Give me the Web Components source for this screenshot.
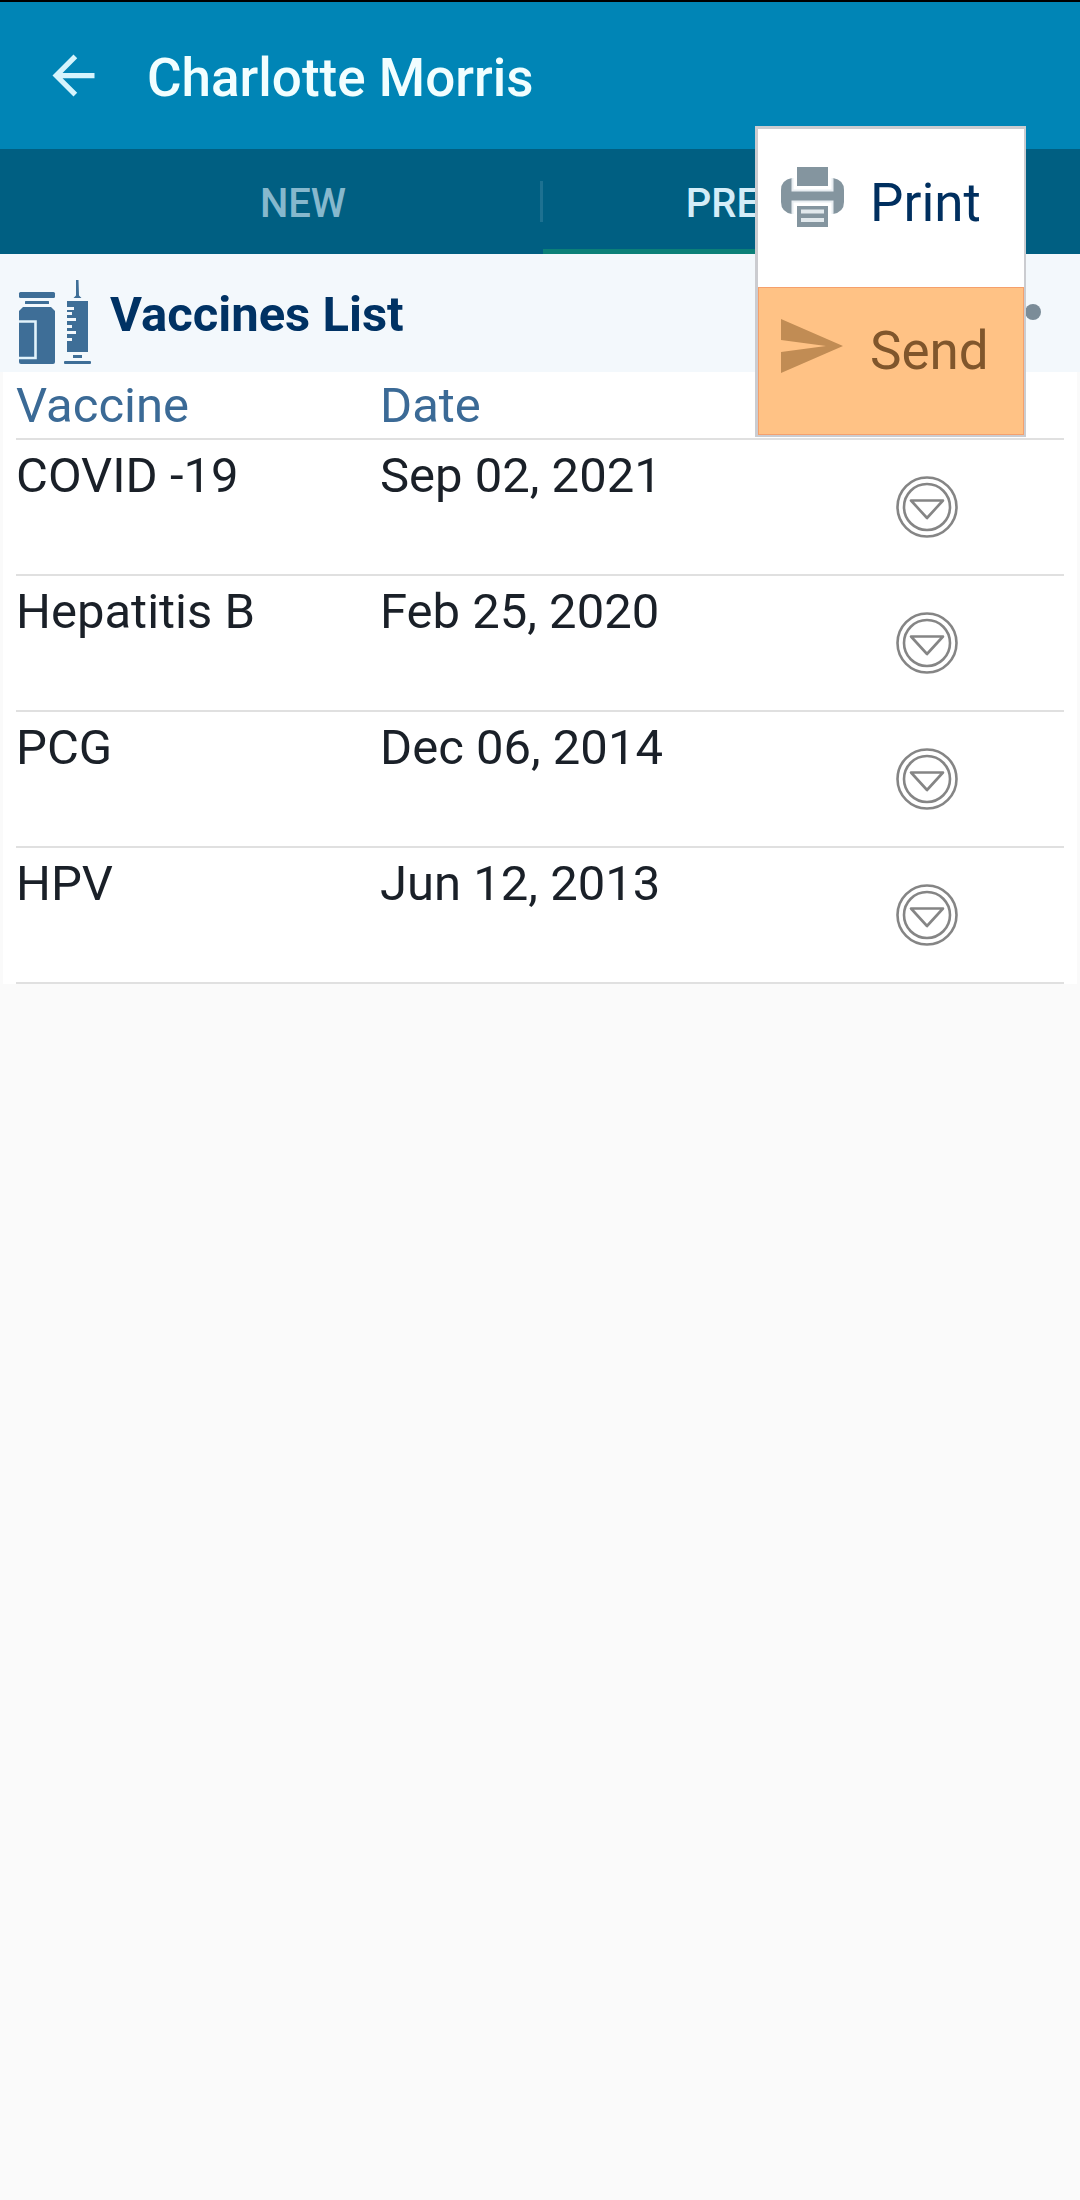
<!DOCTYPE html>
<html lang="en">
<head>
<meta charset="utf-8">
<meta name="viewport" content="width=device-width, initial-scale=1">
<title>Charlotte Morris</title>
<style>
  html, body { margin: 0; min-height: 100%; background: #fafafa; }
  body { font-family: Roboto, "Noto Sans", sans-serif; font-size: 49px; color: #1a2028; }
</style>
</head>
<body>
<patient-page></patient-page>
<script>
const base = `*{box-sizing:border-box}button{font:inherit;color:inherit;background:none;border:0;padding:0;margin:0;cursor:pointer}svg{display:block;flex:none}`;
function define(name, markup, render) {
  customElements.define(name, class extends HTMLElement {
    constructor() {
      super();
      this.attachShadow({ mode: "open" });
      const t = document.createElement("template");
      t.innerHTML = markup.replace("<style>", "<style>" + base);
      this.shadowRoot.append(t.content.cloneNode(true));
      if (render) render(this.shadowRoot);
    }
  });
}

define("app-header", `
<style>
  :host{display:flex;align-items:center;gap:42px;padding:0 42px;height:149px;border-top:2px solid #000;background:#0085b6;color:#f1feff}
  h1{margin:0;padding-top:4px;font-size:53px;line-height:64px;font-weight:500}
</style>
<button type="button" aria-label="Back"><svg width="63" height="63" viewBox="0 0 24 24" fill="#d5f4fd"><path d="M20 11H7.83l5.59-5.59L12 4l-8 8 8 8 1.41-1.41L7.83 13H20v-2z"/></svg></button>
<h1><slot></slot></h1>`);

define("tab-bar", `
<style>
  :host{display:flex;padding-left:66px;height:105px;background:#005f82}
</style>
<slot></slot>`);

define("tab-item", `
<style>
  :host{display:flex;align-items:center;width:474px;border-bottom:5px solid transparent;color:#86b8cd;font-size:40px;font-weight:500}
  :host([selected]){border-color:#0b8078;color:#d4edf8}
  button{width:100%;padding-top:10px;line-height:48px}
</style>
<button type="button"><slot></slot></button>`);

define("tab-divider", `
<style>
  :host{display:block;width:3px;height:41px;margin-top:32px;background:#1d7191}
</style>`);

define("section-header", `
<style>
  :host{display:flex;align-items:center;gap:19px;height:118px;padding:0 16px;background:#f3f8fc;color:#003264}
  .vial{align-self:flex-end;margin-bottom:8px}
  h2{flex:1;margin:0;padding-top:4px;font-size:49px;line-height:60px;font-weight:700}
</style>
<svg class="vial" width="75" height="84" viewBox="0 0 75 84" fill="#3e6e97">
  <rect x="3" y="12" width="36" height="6" rx="1.5"/>
  <rect x="9" y="21" width="24" height="3" rx=".5"/>
  <path d="M7 27h28l4 4v51q0 2-2 2H5q-2 0-2-2V31z"/>
  <path d="M3 41.500h16.500v36.500H3" fill="none" stroke="#e2f3fc" stroke-width="2.600"/>
  <path d="M60 0h2.500l.5 15.500 2.500 2.500h-8l2.500-2.500z"/>
  <path d="M51 21h21v51H51V61h5v-3h-5v-4h9v-3h-9v-3h5v-3h-5v-4h9v-3h-9v-3h5v-3h-5v-2h7v-3h-7z"/>
  <rect x="57" y="75" width="9" height="3"/>
  <rect x="48" y="81" width="27" height="3" rx="1"/>
</svg>
<h2><slot></slot></h2>
<button type="button" aria-label="More options"><svg width="77" height="63" viewBox="0 0 77 63" fill="#7b8c98"><circle cx="8" cy="30" r="8"/><circle cx="27" cy="30" r="8"/><circle cx="46" cy="30" r="8"/></svg></button>`);

define("expand-button", `
<style>
  :host{display:flex;justify-content:center}
</style>
<button type="button" aria-label="Show details"><svg width="62" height="62" viewBox="0 0 62 62" fill="none" stroke="#858585" stroke-width="2.600" stroke-linejoin="round"><circle cx="31" cy="31" r="29.500"/><circle cx="31" cy="31" r="23"/><path d="M15 24.500h32L31 42z"/></svg></button>`);

define("vaccine-table", `
<style>
  :host{display:block;margin:0 3px;padding:0 13px;background:#fff}
  table{width:100%;table-layout:fixed;border-collapse:separate;border-spacing:0}
  th,td{padding:2px 0 0;text-align:left;vertical-align:top;font-weight:400;border-bottom:2px solid #e0e0e0}
  th{height:68px;line-height:64px;padding-top:2px;color:#3b6a96}
  th{padding-top:2px}
  td{height:136px;line-height:68px}
  .name{width:364px}
  .action{width:274px}
  td.action{padding:0;vertical-align:middle}
</style>
<table>
  <thead><tr><th class="name">Vaccine</th><th>Date</th><th class="action"></th></tr></thead>
  <tbody></tbody>
</table>`, root => {
  const rows = [
    ["COVID -19", "Sep 02, 2021"],
    ["Hepatitis B", "Feb 25, 2020"],
    ["PCG", "Dec 06, 2014"],
    ["HPV", "Jun 12, 2013"]
  ];
  root.querySelector("tbody").innerHTML = rows.map(([n, d]) =>
    `<tr><td>${n}</td><td>${d}</td><td class="action"><expand-button></expand-button></td></tr>`).join("");
});

define("menu-item", `
<style>
  :host{display:block;color:#002f5f;font-size:53px}
  :host([active]){background:#ffc285;color:#80562c;box-shadow:inset 0 0 0 1px #f5a06c}
  button{display:flex;align-items:flex-start;gap:26px;width:100%;height:148px;padding:27px 23px 0;text-align:left}
  span{line-height:74px}
</style>
<button type="button"><slot name="icon"></slot><span><slot></slot></span></button>`);

define("popup-menu", `
<style>
  :host{display:block;width:271px;padding-top:10px;background:#fff;border:3px solid #cbccd0;border-right-width:2px;border-bottom-width:2px}
</style>
<slot></slot>`);

define("patient-page", `
<style>
  :host{display:block;position:relative}
  popup-menu{position:absolute;top:126px;right:54px}
</style>
<app-header>Charlotte Morris</app-header>
<tab-bar><tab-item>NEW</tab-item><tab-divider></tab-divider><tab-item selected>PREVIOUS</tab-item></tab-bar>
<section-header>Vaccines List</section-header>
<vaccine-table></vaccine-table>
<popup-menu>
  <menu-item>
    <svg slot="icon" width="63" height="62" viewBox="0 0 63 62" fill="#84959f"><path d="M16 1h31v19H16z"/><path d="M11 12v12.500h41V12q11 2 11 12v12q0 10-11 12V35H11v13Q0 46 0 36V24Q0 14 11 12z"/><path d="M11.500 12v12.500h40V12M11.500 48V35.500h40V48" fill="none" stroke="#e8edf1" stroke-width="2"/><path d="M16 40h31v21H16z"/><path d="M20 43.500h23v4H20zM20 52h23v4H20z" fill="#e2e9ed"/></svg>Print</menu-item>
  <menu-item active>
    <svg slot="icon" width="63" height="62" viewBox="0 0 63 62" fill="#c18c54"><path d="M0 5l62 27L0 59V38l45-6L0 26z"/></svg>Send</menu-item>
</popup-menu>`);
</script>
</body>
</html>
